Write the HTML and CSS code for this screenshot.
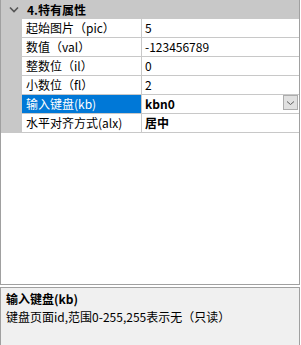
FILE: index.html
```html
<!DOCTYPE html>
<html>
<head>
<meta charset="utf-8">
<link rel="stylesheet" href="styles.css">
</head>
<body>
<div class="panel">
  <div class="grid">
    <div class="cat">
      <span class="chev"><svg width="10" height="7" viewBox="0 0 10 7"><path d="M1 1.5 L5 5.5 L9 1.5" fill="none" stroke="#555" stroke-width="1.6"/></svg></span>
      <span class="cat-title">4.特有属性</span>
    </div>
    <div class="row"><div class="gut"></div><div class="name">起始图片（pic）</div><div class="val">5</div></div>
    <div class="row"><div class="gut"></div><div class="name">数值（val）</div><div class="val">-123456789</div></div>
    <div class="row"><div class="gut"></div><div class="name">整数位（il）</div><div class="val">0</div></div>
    <div class="row"><div class="gut"></div><div class="name">小数位（fl）</div><div class="val">2</div></div>
    <div class="row"><div class="gut"></div><div class="name sel">输入键盘(kb)</div><div class="val bold"><span>kbn0</span><span class="drop"><svg width="9" height="6" viewBox="0 0 9 6"><path d="M1 1.5 L4.5 4.5 L8 1.5" fill="none" stroke="#606060" stroke-width="1"/></svg></span></div></div>
    <div class="row"><div class="gut"></div><div class="name">水平对齐方式(alx)</div><div class="val bold">居中</div></div>
  </div>
  <div class="desc">
    <div class="desc-title">输入键盘(kb)</div>
    <div class="desc-text">键盘页面id,范围0-255,255表示无（只读）</div>
  </div>
</div>
</body>
</html>
```
FILE: styles.css
```css
html, body {
  margin: 0;
  padding: 0;
  background: #ffffff;
}
body {
  width: 301px;
  height: 345px;
  overflow: hidden;
  font-family: "Microsoft YaHei", "Noto Sans CJK SC", "Noto Sans", sans-serif;
  font-size: 12px;
  color: #000;
}
.panel {
  display: flex;
  flex-direction: column;
  gap: 2px;
  width: 300px;
}
.grid {
  height: 284px;
  border: 1px solid #a0a0a0;
  border-top: none;
  background: #fff;
  box-sizing: content-box;
}
.cat {
  height: 19px;
  background: #c8c8c8;
  display: flex;
  align-items: center;
}
.chev {
  width: 21px;
  display: flex;
  justify-content: center;
  padding-left: 2px;
}
.cat-title {
  font-weight: bold;
  padding-left: 3px;
  line-height: 19px;
}
.row {
  display: grid;
  grid-template-columns: 21px 120px 1fr;
  height: 19px;
}
.gut {
  background: #c8c8c8;
}
.name, .val {
  border-bottom: 1px solid #c8c8c8;
  line-height: 18px;
  white-space: nowrap;
  overflow: hidden;
}
.name {
  border-right: 1px solid #c8c8c8;
  padding-left: 4px;
}
.val {
  padding-left: 3px;
  display: flex;
  justify-content: space-between;
  align-items: flex-start;
}
.sel {
  background: #0078d7;
  color: #fff;
}
.bold {
  font-weight: bold;
}
.drop {
  width: 13px;
  height: 13px;
  margin-right: 1px;
  background: #e1e1e1;
  border: 1px solid #adadad;
  display: flex;
  align-items: center;
  justify-content: center;
}
.desc {
  height: 57px;
  border: 1px solid #a0a0a0;
  border-bottom: none;
  background: #f0f0f0;
  padding: 2px 5px;
}
.desc-title {
  font-weight: bold;
  line-height: 18px;
}
.desc-text {
  line-height: 18px;
}
```
